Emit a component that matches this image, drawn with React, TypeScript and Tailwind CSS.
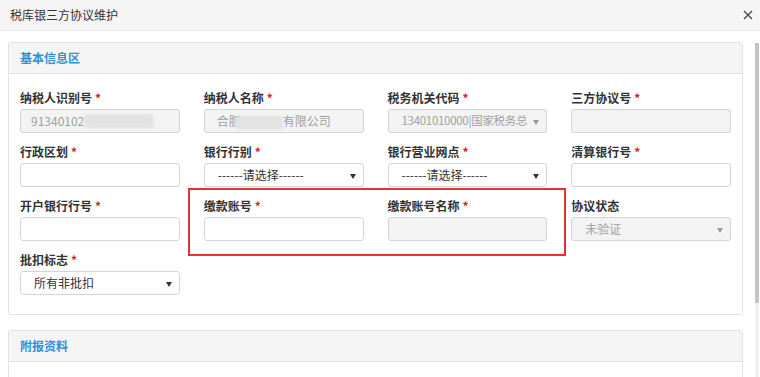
const font = { fontFamily: '"Noto Sans CJK SC", "Liberation Sans", sans-serif' };

type Field = {
  label: string;
  required?: boolean;
  kind: "input" | "select";
  disabled?: boolean;
  value?: React.ReactNode;
};

const Arrow = ({ disabled }: { disabled?: boolean }) => (
  <svg width="6" height="5" viewBox="0 0 6 5" className="absolute right-[7px] top-[10px]">
    <path d="M0 0h6L3 5z" fill={disabled ? "#9a9a9a" : "#333"} />
  </svg>
);

const Blur = ({ w }: { w: number }) => (
  <span
    className="inline-block h-[14px] rounded-sm bg-[#e3e3e3] align-middle blur-[1px]"
    style={{ width: w }}
  />
);

const FieldBox = ({ f }: { f: Field }) => (
  <div className="flex flex-col">
    <div className="flex h-[18px] items-center text-[12px] font-bold text-[#333]">
      {f.label}
      {f.required && <span className="ml-[3px] text-[#e02020]">*</span>}
    </div>
    <div
      className={`relative mt-[2px] flex h-[24px] items-center rounded-[3px] border border-[#d4d4d4] text-[12px] ${
        f.disabled ? "bg-[#f3f3f3] text-[#a0a0a0]" : "bg-white text-[#333]"
      } ${f.kind === "select" ? "pl-[13px] pr-[14px]" : "pl-[10px]"}`}
    >
      <span className="flex items-center whitespace-nowrap">{f.value}</span>
      {f.kind === "select" && <Arrow disabled={f.disabled} />}
    </div>
  </div>
);

const fields: Field[] = [
  {
    label: "纳税人识别号",
    required: true,
    kind: "input",
    disabled: true,
    value: (
      <>
        91340102
        <Blur w={70} />
      </>
    ),
  },
  {
    label: "纳税人名称",
    required: true,
    kind: "input",
    disabled: true,
    value: (
      <>
        <span className="pl-[2px]">合肥</span>
        <span className="-ml-[6px]">
          <Blur w={48} />
        </span>
        有限公司
      </>
    ),
  },
  {
    label: "税务机关代码",
    required: true,
    kind: "select",
    disabled: true,
    value: <span className="text-[11.5px] tracking-[-0.3px]">13401010000|国家税务总</span>,
  },
  { label: "三方协议号", required: true, kind: "input", disabled: true },
  { label: "行政区划", required: true, kind: "input" },
  { label: "银行行别", required: true, kind: "select", value: "------请选择------" },
  { label: "银行营业网点", required: true, kind: "select", value: "------请选择------" },
  { label: "清算银行号", required: true, kind: "input" },
  { label: "开户银行行号", required: true, kind: "input" },
  { label: "缴款账号", required: true, kind: "input" },
  { label: "缴款账号名称", required: true, kind: "input", disabled: true },
  { label: "协议状态", kind: "select", disabled: true, value: "未验证" },
  { label: "批扣标志", required: true, kind: "select", value: "所有非批扣" },
];

const Panel = ({ title, children }: { title: string; children?: React.ReactNode }) => (
  <div className="rounded-[3px] border border-[#e2e2e2] bg-white">
    <div className="flex h-[31px] items-center border-b border-[#e2e2e2] bg-[#f5f5f5] px-[11px] text-[12px] font-bold text-[#2f8fd8]">
      {title}
    </div>
    {children}
  </div>
);

export default function App() {
  return (
    <div className="relative h-[377px] w-[760px] overflow-hidden bg-white" style={font}>
      <div className="flex h-[31px] items-center justify-between border-b border-[#ececec] bg-[#f5f5f5] pl-[10px] pr-[7px]">
        <span className="text-[12px] text-[#333]">税库银三方协议维护</span>
        <svg width="10" height="10" viewBox="0 0 10 10">
          <path d="M1 1l8 8M9 1l-8 8" stroke="#444" strokeWidth="1.3" />
        </svg>
      </div>

      <div className="flex">
        <div className="flex w-[755px] flex-col gap-[15px] pl-[8px] pr-[12px] pt-[11px]">
          <Panel title="基本信息区">
            <div className="grid grid-cols-4 gap-x-[24px] gap-y-[10px] px-[11px] pb-[19px] pt-[15px]">
              {fields.map((f, i) => (
                <FieldBox key={i} f={f} />
              ))}
            </div>
          </Panel>
          <Panel title="附报资料">
            <div className="h-[40px]" />
          </Panel>
        </div>
        <div className="mt-[12px] flex h-[334px] w-[4px] flex-col bg-[#f1f1f1]">
          <div className="h-[260px] bg-[#c4c4c4]" />
        </div>
      </div>

      <div className="absolute left-[188px] top-[188px] h-[68px] w-[378px] border-2 border-[#e8322f]" />
    </div>
  );
}
